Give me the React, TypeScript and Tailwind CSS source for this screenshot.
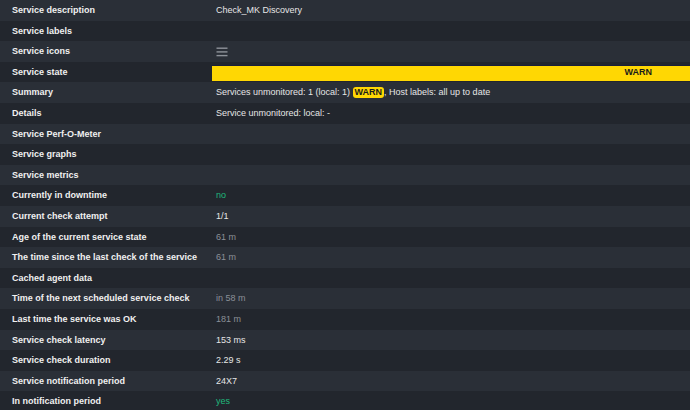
import React from "react";

type Row = { label: string; value?: React.ReactNode };

const grey = "text-[#8b9097]";
const green = "text-[#1fb97c]";

const rows: Row[] = [
  { label: "Service description", value: "Check_MK Discovery" },
  { label: "Service labels" },
  {
    label: "Service icons",
    value: (
      <svg width="12" height="10" viewBox="0 0 12 10" className="mt-[1px]">
        <rect x="0.5" y="0.5" width="11" height="1.4" fill="#8d9299" />
        <rect x="0.5" y="4.2" width="11" height="1.4" fill="#8d9299" />
        <rect x="0.5" y="7.9" width="11" height="1.4" fill="#8d9299" />
      </svg>
    ),
  },
  { label: "Service state" },
  {
    label: "Summary",
    value: (
      <span>
        Services unmonitored: 1 (local: 1){" "}
        <span className="inline-block rounded-[3px] bg-[#ffd703] px-[2px] text-[#1b1b1b] font-bold leading-[11px]">
          WARN
        </span>
        , Host labels: all up to date
      </span>
    ),
  },
  { label: "Details", value: "Service unmonitored: local: -" },
  { label: "Service Perf-O-Meter" },
  { label: "Service graphs" },
  { label: "Service metrics" },
  { label: "Currently in downtime", value: <span className={green}>no</span> },
  { label: "Current check attempt", value: "1/1" },
  { label: "Age of the current service state", value: <span className={grey}>61 m</span> },
  { label: "The time since the last check of the service", value: <span className={grey}>61 m</span> },
  { label: "Cached agent data" },
  { label: "Time of the next scheduled service check", value: <span className={grey}>in 58 m</span> },
  { label: "Last time the service was OK", value: <span className={grey}>181 m</span> },
  { label: "Service check latency", value: "153 ms" },
  { label: "Service check duration", value: "2.29 s" },
  { label: "Service notification period", value: "24X7" },
  { label: "In notification period", value: <span className={green}>yes</span> },
];

export default function App() {
  return (
    <div
      className="w-[690px] h-[410px] overflow-hidden bg-[#23272e] text-[9px] text-[#e6e6e6]"
      style={{ fontFamily: '"Liberation Sans", Arial, sans-serif' }}
    >
      {rows.map((r, i) => (
        <div
          key={i}
          className={
            "flex items-center h-[20.6px] pt-[1px] " +
            (i % 2 === 0 ? "bg-[#2a2f37]" : "bg-[#22262d]")
          }
        >
          <div className="w-[212px] shrink-0 pl-[12px] font-bold text-[#f0f0f0] whitespace-nowrap">
            {r.label}
          </div>
          {r.label === "Service state" ? (
            <div className="flex-1 h-[16px] bg-[#ffd703] border-t border-[#1a1f3a] flex items-center justify-end pr-[38px] font-bold text-[#1b1b1b]">
              WARN
            </div>
          ) : (
            <div className="flex-1 pl-[4px] flex items-center whitespace-nowrap">
              {r.value}
            </div>
          )}
        </div>
      ))}
    </div>
  );
}
